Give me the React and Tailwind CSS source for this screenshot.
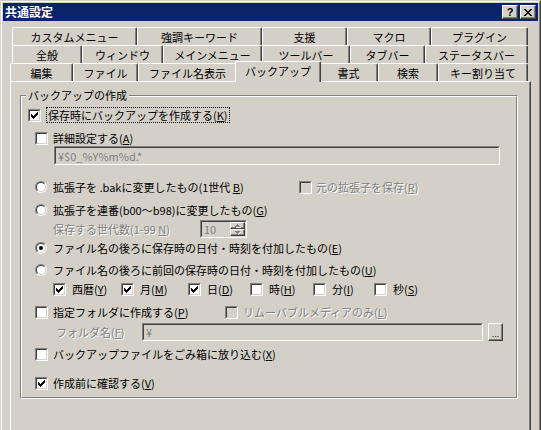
import React from "react";

const DIS = "text-[#808080] [text-shadow:1px_1px_0_#ffffff]";

function CheckMark() {
  const cols = [2, 3, 4, 3, 2, 1, 0];
  return (
    <svg width="9" height="9" viewBox="0 0 9 9" shapeRendering="crispEdges">
      {cols.map((r, c) => (
        <rect key={c} x={1 + c} y={1 + r} width="1" height="3" fill="#000" />
      ))}
    </svg>
  );
}

function Check({ checked, disabled }) {
  return (
    <span className="inline-block w-[13px] h-[13px] shrink-0 border border-t-[#808080] border-l-[#808080] border-r-white border-b-white">
      <span
        className={
          disabled
            ? "flex w-[11px] h-[11px] border border-t-[#404040] border-l-[#404040] border-r-[#d4d0c8] border-b-[#d4d0c8] bg-[#d4d0c8]"
            : "flex w-[11px] h-[11px] border border-t-[#404040] border-l-[#404040] border-r-[#d4d0c8] border-b-[#d4d0c8] bg-white"
        }
      >
        {checked && <CheckMark />}
      </span>
    </span>
  );
}

function Radio({ checked }) {
  return (
    <span className="inline-block w-[12px] h-[12px] shrink-0 rounded-full border border-t-[#808080] border-l-[#808080] border-r-white border-b-white">
      <span className="flex w-[10px] h-[10px] items-center justify-center rounded-full border border-t-[#404040] border-l-[#404040] border-r-[#d4d0c8] border-b-[#d4d0c8] bg-white">
        {checked && <span className="w-[4px] h-[4px] rounded-full bg-black" />}
      </span>
    </span>
  );
}

function K({ children }) {
  return <span className="underline underline-offset-[1px]">{children}</span>;
}

const row1 = [
  { t: "カスタムメニュー", w: "w-[125px]" },
  { t: "強調キーワード", w: "w-[125px]" },
  { t: "支援", w: "w-[85px]" },
  { t: "マクロ", w: "w-[84px]" },
  { t: "プラグイン", w: "w-[97px]" },
];
const row2 = [
  { t: "全般", w: "w-[70px]" },
  { t: "ウィンドウ", w: "w-[81px]" },
  { t: "メインメニュー", w: "w-[99px]" },
  { t: "ツールバー", w: "w-[88px]" },
  { t: "タブバー", w: "w-[75px]" },
  { t: "ステータスバー", w: "w-[103px]" },
];
const row3 = [
  { t: "編集", w: "w-[63px]" },
  { t: "ファイル", w: "w-[65px]" },
  { t: "ファイル名表示", w: "w-[99px]" },
  { t: "バックアップ", w: "w-[86px]", sel: true },
  { t: "書式", w: "w-[59px]" },
  { t: "検索", w: "w-[60px]" },
  { t: "キー割り当て", w: "w-[90px]" },
];

function Tab({ t, w, sel }) {
  if (sel) {
    return (
      <div
        className={
          w +
          " relative z-10 -mx-[2px] -mt-[2px] h-[21px] shrink-0 flex items-start justify-center pt-[2px] bg-[#d4d0c8] border-t border-l border-white border-r border-r-[#404040] rounded-tl-[2px] rounded-tr-[2px] shadow-[inset_-1px_0_0_#808080] text-[11px] leading-[15px] text-black"
        }
      >
        {t}
      </div>
    );
  }
  return (
    <div
      className={
        w +
        " h-[18px] shrink-0 flex items-center justify-center bg-[#d4d0c8] border-t border-l border-white border-r border-r-[#404040] rounded-tl-[2px] rounded-tr-[2px] shadow-[inset_-1px_0_0_#808080] text-[11px] leading-[16px] text-black"
      }
    >
      {t}
    </div>
  );
}

function Raised({ className, children }) {
  return (
    <div
      className={
        "flex items-center justify-center bg-[#d4d0c8] border border-t-white border-l-white border-r-[#404040] border-b-[#404040] shadow-[inset_-1px_-1px_0_#808080] " +
        className
      }
    >
      {children}
    </div>
  );
}

function Sunken({ className, children }) {
  return (
    <div
      className={
        "border border-t-[#808080] border-l-[#808080] border-r-white border-b-white " +
        className
      }
    >
      <div className="flex h-full w-full items-center border border-t-[#404040] border-l-[#404040] border-r-[#d4d0c8] border-b-[#d4d0c8] bg-[#d4d0c8]">
        {children}
      </div>
    </div>
  );
}

export default function App() {
  return (
    <div className="w-[541px] h-[430px] overflow-hidden bg-[#d4d0c8] font-['Noto_Sans_CJK_JP','Noto_Sans',sans-serif] text-black">
      <div className="h-[470px] border border-t-[#d4d0c8] border-l-[#d4d0c8] border-r-[#404040] border-b-[#404040]">
        <div className="flex h-full flex-col border border-t-white border-l-white border-r-[#808080] border-b-[#808080] p-[1px]">
          {/* Title bar */}
          <div className="flex h-[18px] shrink-0 items-center justify-between bg-[#0a246a] pl-[2px] pr-[2px]">
            <span className="text-[12px] leading-[16px] font-bold text-white">共通設定</span>
            <div className="flex items-center gap-[2px]">
              <Raised className="w-[16px] h-[14px]">
                <span className="text-[11px] leading-[11px] font-bold font-['Liberation_Sans',sans-serif] text-black">?</span>
              </Raised>
              <Raised className="w-[16px] h-[14px]">
                <svg width="8" height="7" viewBox="0 0 8 7" shapeRendering="crispEdges">
                  <path d="M0 0h2v1h-2zM6 0h2v1h-2zM1 1h2v1h-2zM5 1h2v1h-2zM2 2h4v1h-4zM3 3h2v1h-2zM2 4h4v1h-4zM1 5h2v1h-2zM5 5h2v1h-2zM0 6h2v1h-2zM6 6h2v1h-2z" fill="#000" />
                </svg>
              </Raised>
            </div>
          </div>

          {/* Client */}
          <div className="flex flex-1 flex-col pl-[7px] pr-[7px] pt-[6px]">
            <div className="ml-[2px] flex">
              {row1.map((x) => (
                <Tab key={x.t} {...x} />
              ))}
            </div>
            <div className="ml-[2px] flex">
              {row2.map((x) => (
                <Tab key={x.t} {...x} />
              ))}
            </div>
            <div className="flex h-[18px] items-start">
              {row3.map((x) => (
                <Tab key={x.t} {...x} />
              ))}
            </div>

            {/* Panel */}
            <div className="flex-1 border-t border-l border-white border-r border-b border-r-[#404040] border-b-[#404040] shadow-[inset_-1px_-1px_0_#808080] pl-[9px] pr-[12px] pt-[13px]">
              {/* Group box */}
              <div className="relative border border-t-[#808080] border-l-[#808080] border-r-white border-b-white">
                <span className="absolute left-[5px] top-[-9px] bg-[#d4d0c8] px-[2px] text-[11px] leading-[16px]">
                  バックアップの作成
                </span>
                <div className="flex flex-col border border-t-white border-l-white border-r-[#808080] border-b-[#808080] pt-[10px] pb-[6px] text-[11px] leading-[16px]">
                  {/* 1 */}
                  <div className="ml-[6px] flex h-[16px] items-center">
                    <Check checked />
                    <span className="ml-[5px] border border-dotted border-black px-[1px] leading-[14px]">
                      保存時にバックアップを作成する(<K>K</K>)
                    </span>
                  </div>
                  {/* 2 */}
                  <div className="ml-[13px] mt-[7px] flex h-[16px] items-center">
                    <Check />
                    <span className="ml-[5px]">
                      詳細設定する(<K>A</K>)
                    </span>
                  </div>
                  {/* input */}
                  <div className="ml-[32px] flex">
                    <Sunken className="w-[446px] h-[19px]">
                      <span className="pl-[2px] text-[#808080]">¥$0_%Y%m%d.*</span>
                    </Sunken>
                  </div>
                  {/* radio 1 */}
                  <div className="ml-[13px] mt-[14px] flex h-[16px] items-center">
                    <div className="flex w-[264px] items-center">
                      <Radio />
                      <span className="ml-[6px]">
                        拡張子を .bakに変更したもの(1世代 <K>B</K>)
                      </span>
                    </div>
                    <Check disabled />
                    <span className={"ml-[4px] " + DIS}>
                      元の拡張子を保存(<K>R</K>)
                    </span>
                  </div>
                  {/* radio 2 */}
                  <div className="ml-[13px] mt-[7px] flex h-[16px] items-center">
                    <Radio />
                    <span className="ml-[6px]">
                      拡張子を連番(b00～b98)に変更したもの(<K>G</K>)
                    </span>
                  </div>
                  {/* spinner */}
                  <div className="ml-[31px] mt-[2px] flex h-[18px] items-center">
                    <span className={"w-[147px] " + DIS}>
                      保存する世代数(1-99 <K>N</K>)
                    </span>
                    <Sunken className="w-[47px] h-[18px]">
                      <span className="flex-1 pl-[2px] text-[#808080]">10</span>
                      <div className="flex h-full w-[15px] flex-col">
                        <Raised className="h-1/2 w-full">
                          <svg width="7" height="4" viewBox="0 0 7 4" shapeRendering="crispEdges">
                            <path d="M3 0h1v1h1v1h1v1h-5v-1h1v-1h1z" fill="#808080" />
                            <path d="M2 3h5v1h-5z" fill="#ffffff" />
                          </svg>
                        </Raised>
                        <Raised className="h-1/2 w-full">
                          <svg width="7" height="4" viewBox="0 0 7 4" shapeRendering="crispEdges">
                            <path d="M1 0h5v1h-1v1h-1v1h-1v-1h-1v-1h-1z" fill="#808080" />
                            <path d="M4 3h1v-1h1v-1h1v1h-1v1h-1v1h-1z" fill="#ffffff" />
                          </svg>
                        </Raised>
                      </div>
                    </Sunken>
                  </div>
                  {/* radio 3 */}
                  <div className="ml-[13px] mt-[2px] flex h-[16px] items-center">
                    <Radio checked />
                    <span className="ml-[6px]">
                      ファイル名の後ろに保存時の日付・時刻を付加したもの(<K>E</K>)
                    </span>
                  </div>
                  {/* radio 4 */}
                  <div className="ml-[13px] mt-[6px] flex h-[16px] items-center">
                    <Radio />
                    <span className="ml-[6px]">
                      ファイル名の後ろに前回の保存時の日付・時刻を付加したもの(<K>U</K>)
                    </span>
                  </div>
                  {/* date row */}
                  <div className="ml-[31px] mt-[3px] flex h-[16px] items-center">
                    <div className="flex w-[68px] items-center">
                      <Check checked />
                      <span className="ml-[6px]">
                        西暦(<K>Y</K>)
                      </span>
                    </div>
                    <div className="flex w-[67px] items-center">
                      <Check checked />
                      <span className="ml-[6px]">
                        月(<K>M</K>)
                      </span>
                    </div>
                    <div className="flex w-[62px] items-center">
                      <Check checked />
                      <span className="ml-[6px]">
                        日(<K>D</K>)
                      </span>
                    </div>
                    <div className="flex w-[63px] items-center">
                      <Check />
                      <span className="ml-[6px]">
                        時(<K>H</K>)
                      </span>
                    </div>
                    <div className="flex w-[61px] items-center">
                      <Check />
                      <span className="ml-[6px]">
                        分(<K>I</K>)
                      </span>
                    </div>
                    <div className="flex items-center">
                      <Check />
                      <span className="ml-[6px]">
                        秒(<K>S</K>)
                      </span>
                    </div>
                  </div>
                  {/* folder checkbox */}
                  <div className="ml-[13px] mt-[7px] flex h-[16px] items-center">
                    <div className="flex w-[190px] items-center">
                      <Check />
                      <span className="ml-[5px]">
                        指定フォルダに作成する(<K>P</K>)
                      </span>
                    </div>
                    <Check disabled />
                    <span className={"ml-[5px] " + DIS}>
                      リムーバブルメディアのみ(<K>L</K>)
                    </span>
                  </div>
                  {/* folder name */}
                  <div className="ml-[34px] mt-[3px] flex h-[18px] items-center">
                    <span className={"w-[86px] " + DIS}>
                      フォルダ名(<K>F</K>)
                    </span>
                    <Sunken className="w-[341px] h-[18px]">
                      <span className="pl-[2px] text-[#808080]">¥</span>
                    </Sunken>
                    <Raised className="ml-[5px] w-[15px] h-[18px]">
                      <span className="text-[9px] leading-[9px] pt-[4px] font-['Liberation_Sans',sans-serif]">...</span>
                    </Raised>
                  </div>
                  {/* gomibako */}
                  <div className="ml-[13px] mt-[5px] flex h-[16px] items-center">
                    <Check />
                    <span className="ml-[5px]">
                      バックアップファイルをごみ箱に放り込む(<K>X</K>)
                    </span>
                  </div>
                  {/* confirm */}
                  <div className="ml-[13px] mt-[13px] flex h-[16px] items-center">
                    <Check checked />
                    <span className="ml-[5px]">
                      作成前に確認する(<K>V</K>)
                    </span>
                  </div>
                </div>
              </div>
            </div>
          </div>
        </div>
      </div>
    </div>
  );
}
